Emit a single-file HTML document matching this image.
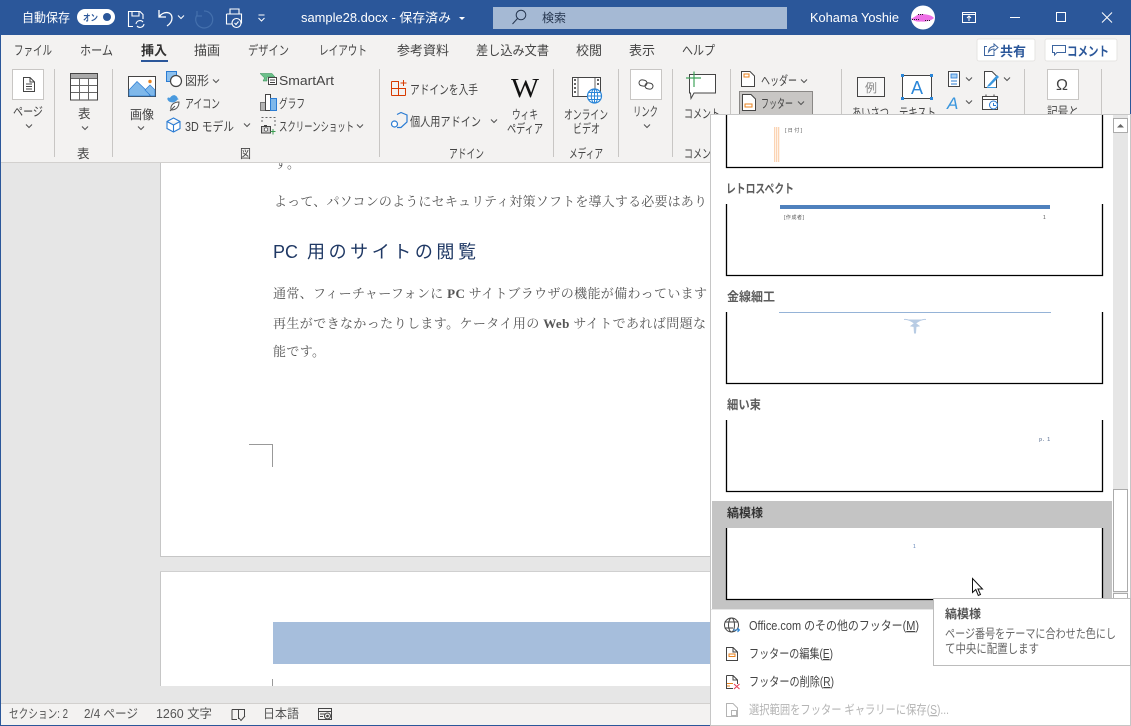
<!DOCTYPE html>
<html lang="ja"><head><meta charset="utf-8"><title>sample28.docx</title>
<style>
html,body{margin:0;padding:0;width:1131px;height:726px;overflow:hidden;background:#e6e6e6}
svg{display:block;font-family:"Liberation Sans","Noto Sans CJK JP",sans-serif}
.r text{font-size:12.5px;fill:#444}
.r .tab{font-size:13px}
.d text{font-family:"Liberation Serif","Noto Serif CJK SC",serif;font-size:13px;fill:#555}
.w text{fill:#fff;font-size:12.500px}
.l{font-weight:700;font-size:12.500px;fill:#5c5c5c}
.m{font-size:12.500px;fill:#444}
</style></head><body>
<svg width="1131" height="726" viewBox="0 0 1131 726" xmlns="http://www.w3.org/2000/svg">
<defs><path id="c" d="M-3-1.500 0 1.500 3-1.500" fill="none" stroke="#555" stroke-width="1.100"/></defs>

<!-- document -->
<rect width="1131" height="726" fill="#e6e6e6"/>
<rect x="160" y="150" width="600" height="407" fill="#fff"/>
<path d="M160.500 150V556.500H760" fill="none" stroke="#c6c6c6"/>
<rect x="160" y="572" width="600" height="114" fill="#fff"/>
<path d="M160.500 572V686" stroke="#c6c6c6"/><path d="M160 571.500H760" stroke="#d0d0d0"/>
<rect x="273" y="622" width="440" height="42" fill="#a6bedc"/>
<path d="M272.500 679V686M249 444.500H272.500V467" fill="none" stroke="#999"/>
<g class="d">
<text x="274" y="168" textLength="26" lengthAdjust="spacing">す。</text>
<text x="274" y="206" textLength="433" lengthAdjust="spacing">よって、パソコンのようにセキュリティ対策ソフトを導入する必要はあり</text>
<text x="273" y="298" textLength="434" lengthAdjust="spacing">通常、フィーチャーフォンに <tspan font-weight="700">PC</tspan> サイトブラウザの機能が備わっています</text>
<text x="273" y="328" textLength="433" lengthAdjust="spacing">再生ができなかったりします。ケータイ用の <tspan font-weight="700">Web</tspan> サイトであれば問題な</text>
<text x="273" y="356" textLength="52" lengthAdjust="spacing">能です。</text>
</g>
<text x="273" y="258" font-size="18" fill="#1f3864" textLength="25" lengthAdjust="spacingAndGlyphs">PC</text>
<text x="307" y="258" font-size="18" fill="#1f3864" textLength="169" lengthAdjust="spacing">用のサイトの閲覧</text>

<!-- title bar -->
<rect width="1131" height="35" fill="#2b579a"/>
<rect x="0" y="0" width="1" height="726" fill="#2b579a"/><rect x="1130" y="0" width="1" height="726" fill="#2b579a"/><rect y="725" width="1131" height="1" fill="#2b579a"/>
<g class="w">
<text x="22" y="22" textLength="48" lengthAdjust="spacingAndGlyphs">自動保存</text>
<text x="301" y="22" textLength="150" lengthAdjust="spacingAndGlyphs">sample28.docx - 保存済み</text>
<text x="810" y="22" textLength="89" lengthAdjust="spacingAndGlyphs">Kohama Yoshie</text>
</g>
<rect x="77" y="9" width="38" height="16" rx="8" fill="#fff"/><circle cx="107" cy="17" r="4" fill="#2b579a"/>
<text x="83" y="21" font-size="9" fill="#2b579a" font-weight="700" textLength="15" lengthAdjust="spacingAndGlyphs">オン</text>
<g fill="none" stroke="#fff" stroke-width="1.100">
<path d="M133 26.500H128.500V11.500H140L143 14.500V19M132 11.500V16H139V11.500"/><path d="M136 24a4 4 0 0 1 7-2M144 24a4 4 0 0 1-7 2"/>
<path d="M159 10V17H166M159.500 16.500C163 11 172 11 172 18C172 21 170 24 167 26" stroke-width="1.300"/>
<path d="M204 11a8.500 8.500 0 1 1-7 4M197 11v5h5" stroke="#4470ad" stroke-width="1.200"/>
<path d="M230 14V9H239V14M226.500 14H241.500V23H238M226.500 14V24H232"/><circle cx="236.500" cy="23" r="4.500" fill="#2b579a"/><path d="M234.500 23l1.500 1.500 2.500-3"/>
</g>
<path d="M178 15.500 181 18.500 184 15.500" fill="none" stroke="#fff"/>
<path d="M258.500 15H264.500M258.500 18 261.500 21 264.500 18" fill="none" stroke="#fff"/>
<path d="M459 17h6l-3 3z" fill="#fff"/>
<rect x="493" y="7" width="294" height="22" fill="#a5b9d4"/>
<circle cx="521" cy="15" r="4.800" fill="none" stroke="#26364f"/><path d="M517.500 18.500 512.500 24" stroke="#26364f"/>
<text x="542" y="22" font-size="12" fill="#26364f" textLength="24" lengthAdjust="spacingAndGlyphs">検索</text>
<circle cx="923" cy="17.500" r="12" fill="#fff"/><path d="M911 19C916 16 918 14 921 14C925 14 932 15 934 18C931 21 925 22 921 21.500C917 22 914 21 911 19Z" fill="#ee6fe6"/><path d="M912 19.500H920M925 20.500H931M918 14.500H924" stroke="#222" stroke-dasharray="1 1"/>
<g fill="none" stroke="#fff">
<path d="M962.500 12.500H975.500V22.500H962.500ZM962.500 14.500H975.500M969 21V16M967 18 969 16 971 18"/>
<path d="M1010 17.500H1020"/><rect x="1056.500" y="12.500" width="9" height="9"/><path d="M1102 12.500 1112 22.500M1112 12.500 1102 22.500"/>
</g>

<!-- ribbon -->
<rect x="1" y="35" width="1129" height="127" fill="#f3f2f1"/><rect x="1" y="162" width="1129" height="1" fill="#d2d0ce"/>
<g class="r">
<text class="tab" x="14" y="55" textLength="38" lengthAdjust="spacingAndGlyphs">ファイル</text>
<text class="tab" x="80" y="55" textLength="33" lengthAdjust="spacingAndGlyphs">ホーム</text>
<text class="tab" x="141" y="55" textLength="26" font-weight="700" style="fill:#333">挿入</text>
<text class="tab" x="194" y="55" textLength="26">描画</text>
<text class="tab" x="248" y="55" textLength="41" lengthAdjust="spacingAndGlyphs">デザイン</text>
<text class="tab" x="319" y="55" textLength="48" lengthAdjust="spacingAndGlyphs">レイアウト</text>
<text class="tab" x="397" y="55" textLength="52">参考資料</text>
<text class="tab" x="476" y="55" textLength="73" lengthAdjust="spacingAndGlyphs">差し込み文書</text>
<text class="tab" x="576" y="55" textLength="26">校閲</text>
<text class="tab" x="629" y="55" textLength="26">表示</text>
<text class="tab" x="682" y="55" textLength="33" lengthAdjust="spacingAndGlyphs">ヘルプ</text>
<text x="13" y="116" textLength="30" lengthAdjust="spacingAndGlyphs">ページ</text>
<text x="78" y="118" textLength="12">表</text>
<text x="77" y="158" textLength="12">表</text>
<text x="130" y="119" textLength="24" lengthAdjust="spacingAndGlyphs">画像</text>
<text x="185" y="85" textLength="24" lengthAdjust="spacingAndGlyphs">図形</text>
<text x="185" y="108" textLength="35" lengthAdjust="spacingAndGlyphs">アイコン</text>
<text x="185" y="131" textLength="49" lengthAdjust="spacingAndGlyphs">3D モデル</text>
<text x="279" y="85" textLength="55" lengthAdjust="spacingAndGlyphs">SmartArt</text>
<text x="279" y="108" textLength="26" lengthAdjust="spacingAndGlyphs">グラフ</text>
<text x="279" y="131" textLength="75" lengthAdjust="spacingAndGlyphs">スクリーンショット</text>
<text x="240" y="158" textLength="11" lengthAdjust="spacingAndGlyphs">図</text>
<text x="410" y="94" textLength="68" lengthAdjust="spacingAndGlyphs">アドインを入手</text>
<text x="410" y="126" textLength="71" lengthAdjust="spacingAndGlyphs">個人用アドイン</text>
<text x="512" y="119" textLength="26" lengthAdjust="spacingAndGlyphs">ウィキ</text>
<text x="507" y="133" textLength="36" lengthAdjust="spacingAndGlyphs">ペディア</text>
<text x="449" y="158" textLength="35" lengthAdjust="spacingAndGlyphs">アドイン</text>
<text x="564" y="119" textLength="44" lengthAdjust="spacingAndGlyphs">オンライン</text>
<text x="573" y="133" textLength="27" lengthAdjust="spacingAndGlyphs">ビデオ</text>
<text x="569" y="158" textLength="34" lengthAdjust="spacingAndGlyphs">メディア</text>
<text x="633" y="116" textLength="25" lengthAdjust="spacingAndGlyphs">リンク</text>
<text x="684" y="118" textLength="36" lengthAdjust="spacingAndGlyphs">コメント</text>
<text x="684" y="158" textLength="36" lengthAdjust="spacingAndGlyphs">コメント</text>
<text x="761" y="85" textLength="36" lengthAdjust="spacingAndGlyphs">ヘッダー</text>
<text x="852" y="117" textLength="37" lengthAdjust="spacingAndGlyphs">あいさつ</text>
<text x="899" y="117" textLength="37" lengthAdjust="spacingAndGlyphs">テキスト</text>
<text x="1047" y="116" textLength="32" lengthAdjust="spacingAndGlyphs">記号と</text>
</g>
<!-- separators -->
<path d="M54.500 69V157M112.500 69V157M379.500 69V157M553.500 69V157M618.500 69V157M672.500 69V157M730.500 69V157M841.500 69V157M1024.500 69V157M1101.500 69V157" stroke="#c8c6c4"/>
<rect x="141" y="60" width="27" height="2" fill="#2b579a"/>
<!-- share/comment -->
<rect x="977" y="39" width="58" height="22" rx="2" fill="#fff" stroke="#e6e4e2"/>
<rect x="1045" y="39" width="72" height="22" rx="2" fill="#fff" stroke="#e6e4e2"/>
<path d="M987 46.500H984.500V55.500H994V52M988.500 52C989 48 991 46.500 994 46.500V44L998 47.500 994 51V49C992 49 990 50 988.500 52Z" fill="none" stroke="#3d659f"/>
<text x="1000" y="56" font-size="13" font-weight="700" fill="#2b579a" textLength="26">共有</text>
<path d="M1052.500 45.500H1065.500V52.500H1057L1054.500 55V52.500H1052.500Z" fill="none" stroke="#3d659f"/>
<text x="1067" y="56" font-size="13" font-weight="700" fill="#2b579a" textLength="42" lengthAdjust="spacingAndGlyphs">コメント</text>

<!-- page btn -->
<rect x="12.500" y="69.500" width="31" height="30" fill="#fff" stroke="#c8c6c4"/>
<path d="M23.500 77.500H30L34.500 82V91.500H23.500ZM30 77.500V82H34.500M26 84H32M26 86.500H32M26 89H32" fill="none" stroke="#444"/>
<use href="#c" x="29" y="126"/>
<!-- table -->
<rect x="70.500" y="73.500" width="27" height="26.500" fill="#fff" stroke="#444"/><rect x="71" y="74" width="26" height="4" fill="#aaa"/>
<path d="M71 78.500H97M71 85.500H97M71 92.500H97M79.500 78V100M88.500 78V100" stroke="#666"/>
<use href="#c" x="85" y="128"/>
<!-- image -->
<rect x="128.500" y="76.500" width="27" height="20" fill="#fff" stroke="#444"/>
<path d="M129 95V90L137 81.500 148 92 150 96H129Z" fill="#7fb8ea" stroke="#2b7cd3" stroke-width=".7"/><path d="M145 90 150 85 155 90V96H151Z" fill="#7fb8ea" stroke="#2b7cd3" stroke-width=".7"/>
<circle cx="150" cy="81.500" r="1.700" fill="#e8821e"/>
<use href="#c" x="141" y="128"/>
<!-- shapes -->
<rect x="166.500" y="71.500" width="10" height="10" fill="#8cc0ee" stroke="#2b7cd3"/>
<circle cx="176" cy="81" r="5.500" fill="#fff" stroke="#444" stroke-width="1.200"/>
<use href="#c" x="216" y="81"/>
<!-- icons -->
<path d="M170 102C166 100 167 96 170 98C171 96 174 94 176 96C178 97 177 99 179 99L177 100C176 102 173 103 170 102Z" fill="#4a9ade"/>
<path d="M171 110C170 105 174 102 179 102C179 107 176 110 171 110ZM170 111 175 106" fill="#fff" stroke="#555"/>
<path d="M173.500 118 180 121.500V128.500L173.500 132 167 128.500V121.500ZM167 121.500 173.500 125 180 121.500M173.500 125V132" fill="#fff" stroke="#2b7cd3" stroke-width="1.100"/>
<use href="#c" x="247" y="125"/>
<!-- smartart -->
<path d="M260 73.500H272L275 77H267V81H263L264.500 78Z" fill="#6cc08a" stroke="#2d8c50" stroke-width=".5"/>
<rect x="268.500" y="77.500" width="8" height="7" fill="#fff" stroke="#444"/><path d="M270 80H275M270 82.500H275" stroke="#444"/>
<!-- chart -->
<rect x="260.500" y="102.500" width="5" height="8" fill="#b4b4b4" stroke="#777"/>
<rect x="265.500" y="94.500" width="5" height="16" fill="#fff" stroke="#444"/>
<rect x="270.500" y="98.500" width="6" height="12" fill="#7fb8ea" stroke="#2b7cd3"/>
<!-- screenshot -->
<path d="M262 122V117.500H275V127" fill="none" stroke="#666" stroke-dasharray="2 2"/>
<rect x="261.500" y="126.500" width="9" height="6.500" fill="#ccc" stroke="#444"/><rect x="264" y="125" width="3" height="1.500" fill="#444"/><circle cx="266" cy="129.500" r="1.700" fill="#fff" stroke="#444" stroke-width=".7"/>
<path d="M273 129V134.500M270.500 131.500H275.500" stroke="#3a9c50"/>
<use href="#c" x="360" y="126"/>
<!-- addin -->
<path d="M391.500 81.500H405.500M391.500 88.500H405.500M391.500 95.500H405.500M391.500 81.500V95.500M398.500 81.500V95.500M405.500 88V95.500" fill="none" stroke="#d83b01"/>
<rect x="399" y="80" width="9" height="6" fill="#f3f2f1"/><path d="M403.500 80V86M400.500 83H406.500" stroke="#d83b01"/>
<path d="M397 114.500 401 112.500 407 115V122L401 127.500H397" fill="none" stroke="#2b7cd3" stroke-width="1.200"/><circle cx="394.500" cy="124" r="3" fill="#fff" stroke="#2b7cd3" stroke-width="1.200"/>
<use href="#c" x="494" y="121"/>
<text x="511" y="97" font-family="Liberation Serif,serif" font-size="27" fill="#111" textLength="28" lengthAdjust="spacingAndGlyphs">W</text>
<!-- video -->
<rect x="572.500" y="77.500" width="28" height="19" fill="#fff" stroke="#444"/>
<path d="M578 78V96M595 78V96" stroke="#666"/>
<path d="M574 80h2M574 84h2M574 88h2M574 92h2M597 80h2M597 84h2" stroke="#333" stroke-width="1.500"/>
<circle cx="594.500" cy="96" r="7" fill="#fff" stroke="#2b86d8" stroke-width="1.200"/><path d="M587.500 96H601.500M588.500 92.500H600.500M588.500 99.500H600.500M594.500 89V103" stroke="#2b86d8"/><ellipse cx="594.500" cy="96" rx="3.200" ry="7" fill="none" stroke="#2b86d8"/>
<!-- link -->
<rect x="630.500" y="69.500" width="31" height="30" fill="#fff" stroke="#c8c6c4"/>
<rect x="639" y="80" width="8" height="6" rx="3" fill="none" stroke="#444" transform="rotate(10 643 83)"/><rect x="645" y="83" width="8" height="6" rx="3" fill="none" stroke="#444" transform="rotate(10 649 86)"/>
<use href="#c" x="647" y="126"/>
<!-- comment -->
<path d="M689.500 74.500H715.500V93H694L691 98.500 690.500 93H689.500Z" fill="#fff" stroke="#444"/>
<path d="M686 78H701M694 71.500V87" stroke="#3fa35b" stroke-width="1.200"/>
<!-- header/footer -->
<path d="M741.500 71.500H750L754.500 76V86.500H741.500Z" fill="#fff" stroke="#444"/><rect x="744" y="74" width="5" height="3" fill="#fff" stroke="#e8821e"/>
<use href="#c" x="804" y="81"/>
<rect x="739.500" y="91.500" width="73" height="23" fill="#c8c6c4" stroke="#8a8886"/>
<path d="M742.500 94.500H751L755.500 99V110.500H742.500Z" fill="#fff" stroke="#444"/><rect x="745" y="104" width="7" height="3" fill="#fff" stroke="#e8821e"/>
<text x="761" y="108" font-size="12.500" fill="#444" textLength="32" lengthAdjust="spacingAndGlyphs">フッター</text>
<use href="#c" x="801" y="103"/>
<!-- greeting / textbox -->
<rect x="857.500" y="77.500" width="27" height="19" fill="#f8f8f8" stroke="#444"/>
<text x="865" y="92" font-size="12" fill="#888">例</text>
<rect x="902.500" y="75.500" width="29" height="23" fill="#fff" stroke="#444"/>
<path d="M901 75.500h3M930 75.500h3M901 98.500h3M930 98.500h3" stroke="#2b86d8" stroke-width="3"/>
<text x="911" y="94" font-size="18" fill="#2b86d8">A</text>
<!-- quick parts etc -->
<rect x="948.500" y="71.500" width="11" height="15" fill="#fff" stroke="#444"/><rect x="951" y="74" width="6" height="4" fill="#a9d0f2" stroke="#2b7cd3" stroke-width=".8"/><path d="M951 81H957M951 84H957" stroke="#2b7cd3"/>
<use href="#c" x="969" y="79"/>
<text x="947" y="109" font-size="17" font-style="italic" fill="#3a96dd" font-family="Liberation Sans" textLength="17">A</text>
<use href="#c" x="969" y="102"/>
<path d="M984.500 71.500H992L996.500 76V87.500H984.500Z" fill="#fff" stroke="#444"/><path d="M988 85 997 75 999 77 990 86 987 87Z" fill="#3a96dd"/><path d="M987 87.500H996" stroke="#3a96dd"/>
<use href="#c" x="1007" y="79"/>
<rect x="982.500" y="96.500" width="15" height="13" fill="#fff" stroke="#444"/><path d="M982.500 99.500H997.500M986 94.500V97M994 94.500V97" stroke="#444"/>
<circle cx="993.500" cy="105" r="4" fill="#fff" stroke="#2b7cd3"/><path d="M993.500 103V105.500H996" fill="none" stroke="#2b7cd3"/>
<rect x="1047.500" y="69.500" width="31" height="30" fill="#fff" stroke="#c8c6c4"/>
<text x="1056" y="90" font-size="16" fill="#444" font-family="Liberation Sans">Ω</text>

<!-- status bar -->
<rect x="1" y="703" width="1129" height="22" fill="#f3f2f1"/><rect x="1" y="703" width="1129" height="1" fill="#d2d0ce"/>
<g font-size="12.500" fill="#555">
<text x="9" y="718" textLength="59" lengthAdjust="spacingAndGlyphs">セクション: 2</text>
<text x="84" y="718" textLength="54" lengthAdjust="spacingAndGlyphs">2/4 ページ</text>
<text x="156" y="718" textLength="56" lengthAdjust="spacingAndGlyphs">1260 文字</text>
<text x="263" y="718" textLength="36" lengthAdjust="spacingAndGlyphs">日本語</text>
</g>
<path d="M232 709.500H238.500V719M238.500 709.500H244.500V717M232 709.500V719.500H237M239 718 241 720.500 245 716" fill="none" stroke="#444"/>
<path d="M318.500 708.500H331.500V719.500H318.500ZM318.500 711.500H331.500M320 714H325M320 716.500H323" fill="none" stroke="#444"/><circle cx="327.500" cy="716" r="3" fill="#f3f2f1" stroke="#444"/><circle cx="327.500" cy="716" r="1.300" fill="#444"/>

<!-- panel -->
<rect x="710.500" y="114.500" width="420" height="611" fill="#fff" stroke="#c6c6c6"/>
<rect x="1130" y="114" width="1" height="612" fill="#c6c6c6"/>
<!-- scrollbar -->
<rect x="1113" y="115" width="15" height="484" fill="#e6e6e6"/>
<rect x="1113.500" y="118.500" width="14" height="14" fill="#fff" stroke="#ababab"/><path d="M1117 127.500H1124L1120.500 124Z" fill="#666"/>
<rect x="1113.500" y="489.500" width="14" height="102" fill="#fff" stroke="#ababab"/>
<rect x="1113.500" y="593.500" width="14" height="14" fill="#fff" stroke="#ababab"/>
<!-- gallery -->
<path d="M726.500 115V167.500H1102.500V115" fill="none" stroke="#000" stroke-width="1.300"/>
<rect x="774" y="127" width="1.300" height="35" fill="#fbd4b4"/><rect x="776" y="127" width="1.300" height="35" fill="#fbd4b4"/><rect x="778" y="127" width="1.300" height="35" fill="#fbd4b4"/>
<text x="785" y="132" font-size="5" fill="#555" textLength="17" lengthAdjust="spacing">[日付]</text>

<text x="726" y="193" class="l" textLength="68" lengthAdjust="spacingAndGlyphs">レトロスペクト</text>
<path d="M726.500 204V275.500H1102.500V204" fill="none" stroke="#000" stroke-width="1.300"/>
<rect x="780" y="205" width="270" height="4" fill="#4f81bd"/>
<text x="784" y="219" font-size="5" fill="#555" textLength="20" lengthAdjust="spacing">[作成者]</text><text x="1043" y="219" font-size="5" fill="#555">1</text>

<text x="727" y="301" class="l" textLength="48" lengthAdjust="spacingAndGlyphs">金線細工</text>
<path d="M726.500 312V383.500H1102.500V312" fill="none" stroke="#000" stroke-width="1.300"/>
<rect x="779" y="312" width="272" height="1" fill="#95b3d7"/>
<path d="M904 319.500C908 319 911 321 915 323.500 919 321 922 319 926 319.500M911 326 915 323 919 326 916 326.500 915.500 333H914.500L914 326.500Z" fill="#b8cce4" stroke="#b8cce4"/>

<text x="727" y="409" class="l" textLength="34" lengthAdjust="spacingAndGlyphs">細い束</text>
<path d="M726.500 420V491.500H1102.500V420" fill="none" stroke="#000" stroke-width="1.300"/>
<text x="1039" y="441" font-size="5" fill="#7f8fa9" font-weight="700" textLength="11">p. 1</text>

<rect x="712" y="501" width="400" height="108" fill="#c4c4c4"/>
<text x="727" y="517" font-size="12" font-weight="700" fill="#333" textLength="36">縞模様</text>
<rect x="726.500" y="528" width="376" height="71.500" fill="#fff"/>
<path d="M726.500 528V599.500H1102.500V528" fill="none" stroke="#000" stroke-width="1.300"/>
<text x="913" y="548" font-size="5" fill="#5b7fb5">1</text>
<rect x="711" y="609" width="402" height="1" fill="#e6e6e6"/>

<!-- menu items -->
<circle cx="731.500" cy="625" r="7" fill="none" stroke="#444"/><ellipse cx="731.500" cy="625" rx="3" ry="7" fill="none" stroke="#444"/><path d="M724.500 622H738.500M724.500 628H733" stroke="#444"/>
<path d="M733 630H739.500M737.500 628 739.500 630 737.500 632" fill="none" stroke="#2b86d8"/>
<text x="749" y="630" class="m" textLength="170" lengthAdjust="spacingAndGlyphs">Office.com のその他のフッター(<tspan text-decoration="underline">M</tspan>)</text>
<path d="M726.500 647.500H733L737.500 652V660.500H726.500ZM733 647.500V652H737.500" fill="#fff" stroke="#444"/><rect x="729" y="654" width="6" height="2.500" fill="#fff" stroke="#e8821e"/>
<text x="749" y="658" class="m" textLength="84" lengthAdjust="spacingAndGlyphs">フッターの編集(<tspan text-decoration="underline">E</tspan>)</text>
<path d="M726.500 675.500H733L737.500 680V684M726.500 675.500V688.500H733M733 675.500V680H737.500" fill="none" stroke="#444"/><path d="M727 683.500H733M727 686H730" stroke="#e8821e"/>
<path d="M734 684 739.500 689M739.500 684 734 689" stroke="#e5475f" stroke-width="1.100"/>
<text x="749" y="686" class="m" textLength="85" lengthAdjust="spacingAndGlyphs">フッターの削除(<tspan text-decoration="underline">R</tspan>)</text>
<path d="M726.500 703.500H733L737.500 708V716.500H726.500Z" fill="#fff" stroke="#b4b4b4"/><rect x="731.500" y="710.500" width="5" height="5" fill="#fff" stroke="#b4b4b4"/>
<text x="749" y="714" font-size="12.500" fill="#b4b4b4" textLength="200" lengthAdjust="spacingAndGlyphs">選択範囲をフッター ギャラリーに保存(<tspan text-decoration="underline">S</tspan>)...</text>

<!-- cursor -->
<path d="M972.500 578.500V592.500L975.800 589.500 978.300 595.500 980.500 594.500 978 589H982.500Z" fill="#fff" stroke="#111" stroke-width="1"/>
<!-- tooltip -->
<rect x="933.500" y="598.500" width="197" height="67" fill="#fff" stroke="#bcbcbc"/>
<text x="945" y="618" font-size="12" font-weight="700" fill="#555" textLength="36">縞模様</text>
<g font-size="12.500" fill="#666">
<text x="945" y="638" textLength="171" lengthAdjust="spacingAndGlyphs">ページ番号をテーマに合わせた色にし</text>
<text x="945" y="653" textLength="94" lengthAdjust="spacingAndGlyphs">て中央に配置します</text>
</g>
</svg>
</body></html>
